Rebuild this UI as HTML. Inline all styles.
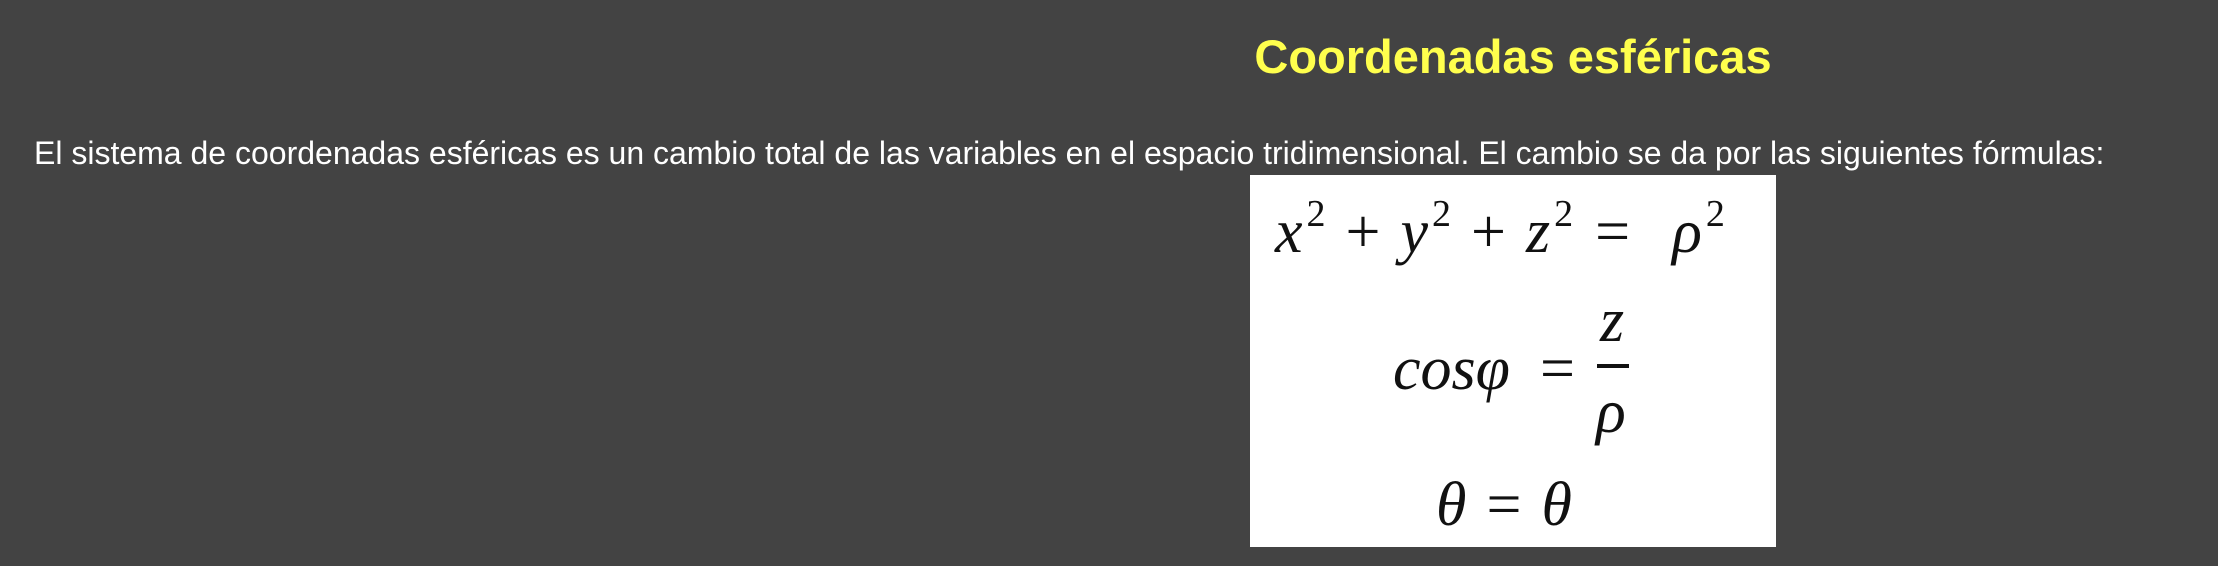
<!DOCTYPE html>
<html><head><meta charset="utf-8"><style>
html,body{margin:0;padding:0;}
body{width:2218px;height:566px;background:#434343;position:relative;overflow:hidden;font-family:"Liberation Sans",Arial,sans-serif;}
.t{position:absolute;left:1230px;width:566px;top:29px;text-align:center;color:#ffff4d;font-weight:bold;font-size:47px;white-space:nowrap;}
.p{position:absolute;left:34px;top:135px;color:#fff;font-size:32px;white-space:nowrap;}
.box{position:absolute;left:1250px;top:175px;width:526px;height:372px;background:#fff;}
.m{position:absolute;font-family:"Liberation Serif",serif;font-style:italic;color:#111;font-size:62px;white-space:nowrap;line-height:1;}
.n{font-style:normal;display:inline-block;}
sup{font-size:38px;font-style:normal;vertical-align:0;position:relative;top:-26px;margin-left:4px;}
</style></head><body>
<div class="t">Coordenadas esféricas</div>
<div class="p">El sistema de coordenadas esféricas es un cambio total de las variables en el espacio tridimensional. El cambio se da por las siguientes fórmulas:</div>
<div class="box"></div>
<div class="m" style="left:1275px;top:201px;">x<sup>2</sup><span class="n" style="margin:0 20px">+</span>y<sup>2</sup><span class="n" style="margin:0 20px">+</span>z<sup>2</sup><span class="n" style="margin:0 24px 0 22px">=</span><span style="margin-left:18px">ρ</span><sup>2</sup></div>
<div class="m" style="left:1393px;top:338px;">cosφ</div>
<div class="m n" style="left:1540px;top:338px;">=</div>
<div class="m" style="left:1600px;top:290px;">z</div>
<div style="position:absolute;left:1597px;top:364px;width:32px;height:4px;background:#111;"></div>
<div class="m" style="left:1596px;top:381px;">ρ</div>
<div class="m" style="left:1436px;top:474px;">θ<span class="n" style="margin:0 20px">=</span>θ</div>
</body></html>
